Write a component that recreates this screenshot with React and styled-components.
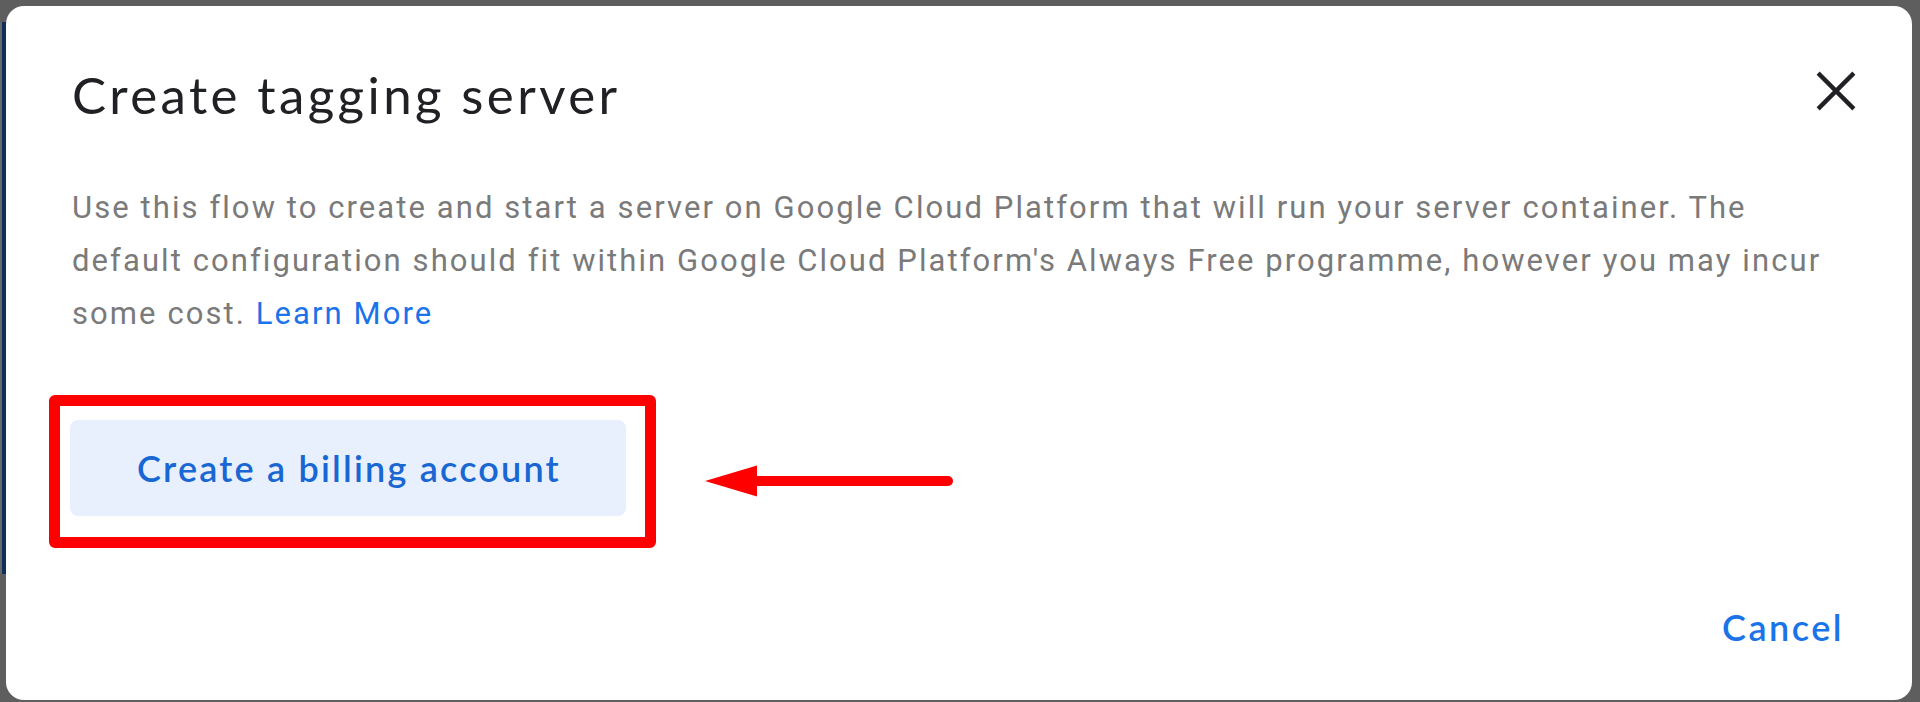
import styled, { createGlobalStyle } from 'styled-components';

const GlobalStyle = createGlobalStyle`
  html, body {
    margin: 0;
    padding: 0;
    height: 702px;
    overflow: hidden;
  }
  body {
    background:
      linear-gradient(to right, #686868 2px, #0f2f5a 2px) left 22px / 6px 552px no-repeat,
      #5e5e5e;
  }
`;

const Page = styled.div`
  box-sizing: border-box;
  height: 702px;
  padding: 6px 8px 0 6px;
`;

const Dialog = styled.div`
  box-sizing: border-box;
  height: 694px;
  background: #fff;
  border-radius: 18px;
  padding-left: 66px;
  display: flex;
  flex-direction: column;
`;

const Header = styled.div`
  display: flex;
  justify-content: space-between;
  align-items: flex-start;
  margin-top: 53px;
  padding-right: 44px;
`;

const Title = styled.h2`
  margin: 6px 0 0;
  font-family: Lato, "Noto Sans", sans-serif;
  font-weight: 400;
  font-size: 51px;
  line-height: 60px;
  letter-spacing: 3.4px;
  color: #202124;
`;

const CloseButton = styled.button`
  width: 64px;
  height: 64px;
  padding: 0;
  border: 0;
  background: none;
  color: #202124;
  cursor: pointer;
  svg {
    display: block;
  }
`;

const Description = styled.p`
  margin: 56px 0 0;
  font-family: Roboto, "Liberation Sans", sans-serif;
  font-size: 31px;
  line-height: 53px;
  letter-spacing: 2.08px;
  white-space: nowrap;
  color: #7a7a7a;
`;

const Link = styled.a`
  color: #1a73e8;
  text-decoration: none;
`;

const ActionRow = styled.div`
  display: flex;
  align-items: flex-start;
  gap: 44px;
  margin: 55px 0 0 -23px;
`;

const Highlight = styled.div`
  border: 11px solid #ff0000;
  border-radius: 6px;
  padding: 14px 19px 21px 10px;
`;

const BillingButton = styled.button`
  display: block;
  width: 556px;
  height: 96px;
  padding: 0 0 0 2px;
  border: 0;
  border-radius: 8px;
  background: #e8f0fe;
  color: #1967d2;
  font-family: Lato, "Noto Sans", sans-serif;
  font-weight: 600;
  font-size: 36px;
  letter-spacing: 2.2px;
  cursor: pointer;
`;

const Arrow = styled.svg`
  display: block;
  margin-top: 66px;
`;

const Footer = styled.div`
  display: flex;
  justify-content: flex-end;
  margin-top: 57px;
  padding-right: 68px;
`;

const TextButton = styled.button`
  padding: 0;
  border: 0;
  background: none;
  color: #1a73e8;
  font-family: Lato, "Noto Sans", sans-serif;
  font-weight: 600;
  font-size: 36px;
  line-height: 44px;
  letter-spacing: 2.5px;
  cursor: pointer;
`;

export default function App() {
  return (
    <>
      <GlobalStyle />
      <Page>
        <Dialog>
          <Header>
            <Title>Create tagging server</Title>
            <CloseButton aria-label="Close">
              <svg width="64" height="64" viewBox="0 0 24 24">
                <path d="M5.3 5.3L18.7 18.7M18.7 5.3L5.3 18.7" stroke="currentColor" strokeWidth="1.6" fill="none" />
              </svg>
            </CloseButton>
          </Header>
          <Description>
            Use this flow to create and start a server on Google Cloud Platform that will run your server container. The
            <br />
            default configuration should fit within Google Cloud Platform's Always Free programme, however you may incur
            <br />
            some cost. <Link href="#">Learn More</Link>
          </Description>
          <ActionRow>
            <Highlight>
              <BillingButton>Create a billing account</BillingButton>
            </Highlight>
            <Arrow width="255" height="40" viewBox="0 0 255 40">
              <line x1="52" y1="20" x2="248" y2="20" stroke="#ff0000" strokeWidth="10" strokeLinecap="round" />
              <polygon points="5,20 57,4.5 57,35.5" fill="#ff0000" />
            </Arrow>
          </ActionRow>
          <Footer>
            <TextButton>Cancel</TextButton>
          </Footer>
        </Dialog>
      </Page>
    </>
  );
}
